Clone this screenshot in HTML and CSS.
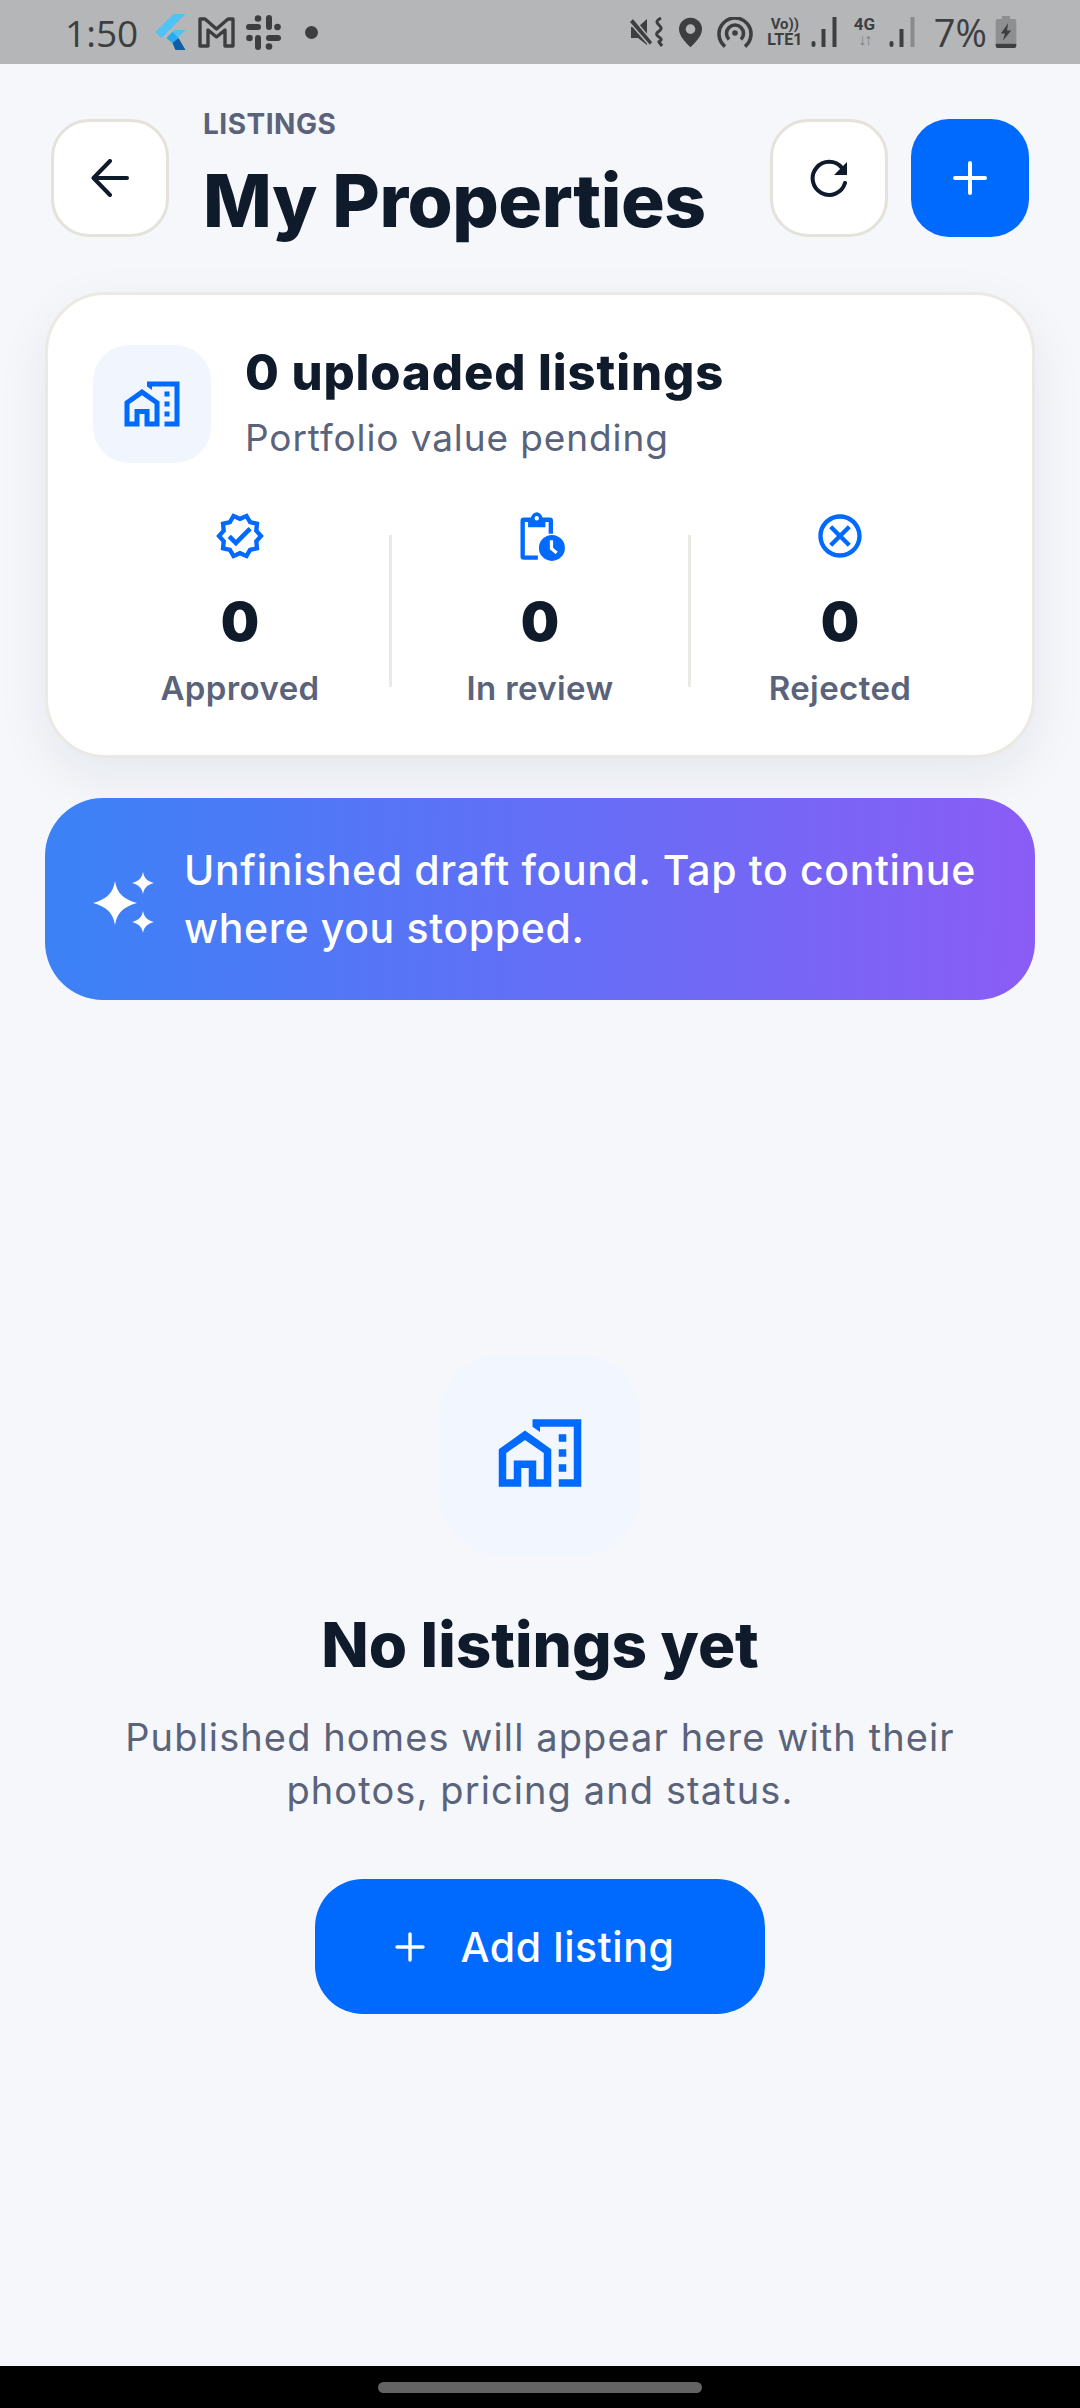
FILE: index.html
```html
<!DOCTYPE html>
<html lang="en">
<head>
<meta charset="utf-8">
<title>My Properties</title>
<link rel="stylesheet" href="styles.css">
</head>
<body>
<div class="phone">
  <div class="status">
    <div class="status-left">
      <span class="time">1:50</span>
      <svg class="si flutter" viewBox="0 0 30 36"><path fill="#4fc3f7" d="M0 18 18 0h12L6 24z"/><path fill="#4fc3f7" d="M11 24 19 16h11L17 29z"/><path fill="#29a9f0" d="m11 24 6-6 6 6-6 5z"/><path fill="#0d5ea8" d="m17 29 6-5 7 12H20z"/></svg>
      <svg class="si gmail" viewBox="0 0 37 32"><path fill="none" stroke="#3d3e40" stroke-width="3.400" stroke-linejoin="round" d="M2 3h5l11.500 10L30 3h5v27h-8V14l-8.500 7L10 14v16H2z"/></svg>
      <svg class="si slack" viewBox="0 0 35 35" fill="#3d3e40"><rect x="0" y="9" width="15" height="6" rx="3"/><circle cx="12" cy="3.500" r="3.300"/><rect x="20" y="0" width="6" height="15" rx="3"/><circle cx="31.500" cy="12" r="3.300"/><rect x="20" y="20" width="15" height="6" rx="3"/><circle cx="23" cy="31.500" r="3.300"/><rect x="9" y="20" width="6" height="15" rx="3"/><circle cx="3.500" cy="23" r="3.300"/></svg>
      <span class="dot"></span>
    </div>
    <div class="status-right">
      <svg class="si mute" viewBox="0 0 34 32"><path fill="#3d3e40" d="M1 11h7l9-8v26l-9-7H1z"/><path fill="#3d3e40" stroke="#b5b6b8" stroke-width="1.500" d="M3 2 23 26l-3 4L-1 6z"/><path fill="none" stroke="#3d3e40" stroke-width="3" d="M31 2c-5 3-5 4-2 7s3 4-1 7 2 5 3 7-3 2-2 3l3 4"/></svg>
      <svg class="si pin" viewBox="0 0 24 31"><path fill="#3d3e40" fill-rule="evenodd" d="M12 0a12 12 0 0 1 12 12c0 7-7 14-12 19C7 26 0 19 0 12A12 12 0 0 1 12 0zm0 7a5 5 0 1 0 0 10 5 5 0 0 0 0-10z"/></svg>
      <svg class="si hotspot" viewBox="0 0 36 31" fill="none" stroke="#3d3e40" stroke-width="3.600"><path d="M8 29.500a16 16 0 1 1 20 0"/><path d="M12 22.500a8.500 8.500 0 1 1 12 0"/><circle cx="18" cy="16" r="2.800" fill="#3d3e40" stroke="none"/></svg>
      <span class="net"><span class="net-top">Vo))</span><span>LTE1</span></span>
      <svg class="si bars" viewBox="0 0 26 30" fill="#3d3e40"><rect x="0" y="24" width="4" height="6" rx="2"/><rect x="10" y="12" width="4" height="18"/><rect x="21" y="0" width="4" height="30"/></svg>
      <span class="net net-4g"><span>4G</span><span class="arrows">↓↑</span></span>
      <svg class="si bars bars-weak" viewBox="0 0 26 30"><rect x="0" y="24" width="4" height="6" rx="2" fill="#3d3e40"/><rect x="10" y="12" width="4" height="18" fill="#3d3e40"/><rect x="21" y="0" width="4" height="30" fill="#8a8b8d"/></svg>
      <span class="pct">7%</span>
      <svg class="si batt" viewBox="0 0 20 31"><path fill="#8e8f91" d="M6 0h8v3h4a2 2 0 0 1 2 2v22H0V5a2 2 0 0 1 2-2h4z"/><path fill="#3d3e40" d="M0 27h20v2a2 2 0 0 1-2 2H2a2 2 0 0 1-2-2z"/><path fill="#3d3e40" d="M12 7 5 17h4l-2 7 8-10h-4z"/></svg>
    </div>
  </div>

  <main class="main">
    <header class="head">
      <button class="btn btn-light">
        <svg class="ico-arrow" viewBox="0 0 38 38" fill="none" stroke="#0f1a2b" stroke-width="4" stroke-linecap="round" stroke-linejoin="round"><path d="M36 19H3M19 2 2.500 19 19 36"/></svg>
      </button>
      <div class="titles">
        <div class="eyebrow">LISTINGS</div>
        <h1 class="title">My Properties</h1>
      </div>
      <div class="actions">
        <button class="btn btn-light">
          <svg class="ico-refresh" viewBox="0 0 38 38" fill="none"><path stroke="#0f1a2b" stroke-width="4" stroke-linecap="round" d="M32 9A16.500 16.500 0 1 0 35 24"/><path fill="#0f1a2b" d="M37 3v13H24z"/></svg>
        </button>
        <button class="btn btn-blue">
          <svg class="ico-plus" viewBox="0 0 34 34" fill="none" stroke="#fff" stroke-width="4" stroke-linecap="round"><path d="M17 2v30M2 17h30"/></svg>
        </button>
      </div>
    </header>

    <section class="card">
      <div class="card-top">
        <div class="tile">
          <svg class="ico-60" viewBox="0 0 24 24"><use href="#homework"/></svg>
        </div>
        <div>
          <div class="card-title">0 uploaded listings</div>
          <div class="card-sub">Portfolio value pending</div>
        </div>
      </div>
      <div class="stats">
        <div class="stat">
          <svg class="ico-52" viewBox="0 0 24 24"><path fill="#0069fe" fill-rule="evenodd" d="M23 11.990l-2.440-2.790.340-3.690-3.610-.820L15.400 1.500 12 2.960 8.600 1.500 6.710 4.690 3.100 5.500l.340 3.700L1 11.990l2.440 2.790-.340 3.700 3.610.820 1.890 3.200L12 21.040l3.400 1.470 1.890-3.190 3.610-.820-.340-3.690L23 11.990zm-3.950 1.480-.560.650.080.850.180 1.950-1.900.430-.840.190-.440.740-.990 1.680-1.780-.770-.800-.340-.790.340-1.780.770-.990-1.670-.440-.740-.840-.190-1.900-.430.180-1.960.080-.850-.560-.650L3.670 12l1.290-1.480.560-.650-.090-.860-.180-1.940 1.900-.430.840-.190.440-.740.990-1.680 1.780.770.800.340.790-.340 1.780-.770.990 1.680.440.740.840.190 1.900.430-.180 1.950-.080.850.560.650 1.290 1.470-1.280 1.470z"/><path fill="#0069fe" d="m10.090 13.750-2.320-2.330-1.480 1.490 3.800 3.810 7.340-7.360-1.480-1.490z"/></svg>
          <div class="stat-num">0</div>
          <div class="stat-label">Approved</div>
        </div>
        <div class="stat stat-mid">
          <svg class="ico-52" viewBox="0 0 24 24"><path fill="#0069fe" fill-rule="evenodd" d="M4.500 3.500h3.300C8.200 2 9.300 1 10.500 1s2.300 1 2.700 2.500h3.300A1.500 1.500 0 0 1 18 5v6h-2V5.500h-1.500V8h-8V5.500H5v15.500h6v2H4.500A1.500 1.500 0 0 1 3 21.500V5a1.500 1.500 0 0 1 1.500-1.500zm6-.7a1 1 0 1 0 0 2 1 1 0 0 0 0-2z"/><circle cx="17.500" cy="17.500" r="6" fill="#0069fe"/><path fill="none" stroke="#fff" stroke-width="1.500" d="M17.300 14v3.800l2.400 2"/></svg>
          <div class="stat-num">0</div>
          <div class="stat-label">In review</div>
        </div>
        <div class="stat">
          <svg class="ico-52" viewBox="0 0 24 24"><path fill="#0069fe" d="M12 2C6.470 2 2 6.470 2 12s4.470 10 10 10 10-4.470 10-10S17.530 2 12 2zm0 18c-4.410 0-8-3.590-8-8s3.590-8 8-8 8 3.590 8 8-3.590 8-8 8zm3.590-13L12 10.590 8.410 7 7 8.410 10.590 12 7 15.590 8.410 17 12 13.410 15.590 17 17 15.590 13.410 12 17 8.410z"/></svg>
          <div class="stat-num">0</div>
          <div class="stat-label">Rejected</div>
        </div>
      </div>
    </section>

    <section class="banner">
      <svg class="ico-spark" viewBox="0 0 62 62" fill="#fff"><path d="M23 9c2 12 8 18 22 22-14 4-20 10-22 22-2-12-8-18-22-22 14-4 20-10 22-22z"/><path d="M51 0c1 6 4 9 11 11-7 2-10 5-11 11-1-6-4-9-11-11 7-2 10-5 11-11z"/><path d="M51 39c1 6 4 9 11 11-7 2-10 5-11 11-1-6-4-9-11-11 7-2 10-5 11-11z"/></svg>
      <p class="banner-text">Unfinished draft found. Tap to continue where you stopped.</p>
    </section>

    <section class="empty">
      <div class="tile tile-big">
        <svg class="ico-90" viewBox="0 0 24 24"><use href="#homework"/></svg>
      </div>
      <h2 class="empty-title">No listings yet</h2>
      <p class="empty-text">Published homes will appear here with their photos, pricing and status.</p>
      <button class="add">
        <svg class="ico-add" viewBox="0 0 30 30" fill="none" stroke="#fff" stroke-width="3.400" stroke-linecap="round"><path d="M15 2v26M2 15h26"/></svg>
        <span>Add listing</span>
      </button>
    </section>
  </main>

  <div class="navbar"><span class="pill"></span></div>
</div>
<svg class="defs" width="0" height="0"><defs><symbol id="homework" viewBox="0 0 24 24"><path fill="#0069fe" fill-rule="evenodd" d="M1 11v10h6v-5h2v5h6V11L8 6l-7 5zm12 8h-2v-5H5v5H3v-7l5-3.500 5 3.500v7z"/><path fill="#0069fe" d="M10 3v1.970l2 1.430V5h9v14h-4v2h6V3H10zM17 7h2v2h-2zM17 11h2v2h-2zM17 15h2v2h-2z"/></symbol></defs></svg>
</body>
</html>
```

FILE: styles.css
```css
* { box-sizing: border-box; }
html, body { margin: 0; padding: 0; }
body { background: #f5f7fb; font-family: "Inter", "Liberation Sans", sans-serif; color: #0f1a2b; }
p, h1, h2 { margin: 0; }
button { font: inherit; padding: 0; cursor: pointer; }

.phone { width: 1080px; height: 2408px; display: flex; flex-direction: column; overflow: hidden; }

/* status bar */
.status { height: 64px; flex: none; background: #b5b6b8; display: flex; justify-content: space-between; align-items: center; padding: 0 63px 0 65px; color: #3d3e40; }
.status-left, .status-right { display: flex; align-items: center; }
.time { font: 400 37px/1 "Open Sans", sans-serif; margin-right: 17px; }
.si { display: block; flex: none; }
.flutter { width: 31px; height: 36px; margin-right: 12px; }
.gmail { width: 37px; height: 32px; margin-right: 11px; }
.slack { width: 35px; height: 35px; }
.dot { width: 13px; height: 13px; border-radius: 50%; background: #3d3e40; margin-left: 24px; }
.mute { width: 34px; height: 32px; margin-right: 15px; }
.pin { width: 23px; height: 31px; margin-right: 15px; }
.hotspot { width: 36px; height: 31px; margin-right: 12px; }
.net { width: 40px; display: flex; flex-direction: column; align-items: center; font: 700 16px/15px "Roboto", sans-serif; color: #3d3e40; margin-right: 5px; }
.net-top { font-size: 15px; }
.bars { width: 29px; height: 30px; margin-right: 13px; }
.net-4g { width: 25px; font-size: 17px; line-height: 16px; margin-right: 11px; }
.arrows { color: #808183; font-size: 16px; letter-spacing: -2px; }
.bars-weak { margin-right: 17px; }
.pct { font: 400 38px/1 "Open Sans", sans-serif; margin-right: 8px; }
.batt { width: 22px; height: 32px; }

/* main */
.main { flex: 1; display: flex; flex-direction: column; padding: 55px 45px 0; }
.head { height: 118px; display: flex; align-items: flex-start; padding: 0 6px; }
.btn { width: 118px; height: 118px; border-radius: 38px; display: flex; align-items: center; justify-content: center; flex: none; }
.btn-light { background: #fff; border: 3px solid #e4e2da; }
.btn-blue { background: #0069fe; border: 0; }
.ico-arrow { width: 38px; height: 38px; }
.ico-refresh { width: 38px; height: 38px; }
.ico-plus { width: 34px; height: 34px; }
.titles { flex: 1; margin: -12px 0 0 34px; }
.eyebrow { font-weight: 700; font-size: 28px; line-height: 34px; color: #5a637a; letter-spacing: .5px; }
.title { font-weight: 800; font-size: 73px; line-height: 84px; letter-spacing: -.5px; color: #0f1a2b; white-space: nowrap; margin-top: 18px; }
.actions { display: flex; gap: 23px; }

.card { margin: 55px 0 0; height: 466px; background: #fff; border: 3px solid #ebe9e3; border-radius: 60px; box-shadow: 0 18px 54px rgba(15, 26, 43, .07); padding: 49px 45px 0; }
.card-top { display: flex; align-items: center; gap: 34px; }
.tile { width: 118px; height: 118px; border-radius: 36px; background: #f1f6fe; display: flex; align-items: center; justify-content: center; flex: none; }
.ico-60 { width: 60px; height: 60px; }
.card-title { font-weight: 800; font-size: 49px; line-height: 58px; letter-spacing: .9px; color: #0f1a2b; white-space: nowrap; }
.card-sub { font-weight: 400; font-size: 37px; line-height: 50px; letter-spacing: .9px; color: #5a637a; margin-top: 11px; }

.stats { display: flex; margin: 47px -3px 0; }
.stat { flex: 1; display: flex; flex-direction: column; align-items: center; }
.stat-mid { position: relative; }
.stat-mid::before, .stat-mid::after { content: ""; position: absolute; top: 25px; height: 152px; width: 3px; background: #ebe9e3; }
.stat-mid::before { left: -1px; }
.stat-mid::after { right: -1px; }
.ico-52 { width: 52px; height: 52px; display: block; }
.stat-num { font-weight: 900; font-size: 54px; line-height: 62px; margin-top: 29px; color: #0f1a2b; }
.stat-label { font-weight: 600; font-size: 33px; line-height: 42px; letter-spacing: .4px; color: #5a637a; margin-top: 14px; }

.banner { margin-top: 40px; height: 202px; border-radius: 58px; background: linear-gradient(91deg, #3b82f6, #8b5cf6); display: flex; align-items: center; padding: 0 50px 0 47px; gap: 30px; }
.ico-spark { width: 62px; height: 62px; flex: none; margin-top: 8px; }
.banner-text { font-weight: 500; font-size: 41px; line-height: 58px; letter-spacing: .65px; color: #fff; }

.empty { display: flex; flex-direction: column; align-items: center; margin-top: 355px; }
.tile-big { width: 200px; height: 200px; border-radius: 60px; background: #f2f6fe; }
.ico-90 { width: 90px; height: 90px; margin-bottom: 4px; }
.empty-title { font-weight: 800; font-size: 62px; line-height: 72px; margin-top: 54px; color: #0f1a2b; }
.empty-text { width: 880px; text-align: center; font-weight: 400; font-size: 38px; line-height: 53px; letter-spacing: 1.1px; color: #5a637a; margin-top: 30px; }
.add { margin-top: 62px; width: 450px; height: 135px; border: 0; border-radius: 48px; background: #0069fe; color: #fff; display: flex; align-items: center; justify-content: center; gap: 35px; padding-right: 10px; font-weight: 500; font-size: 41px; letter-spacing: .6px; }
.ico-add { width: 30px; height: 30px; }

.navbar { height: 42px; flex: none; background: #000; display: flex; justify-content: center; padding-top: 16px; }
.pill { width: 324px; height: 11px; border-radius: 6px; background: #636363; }
.defs { position: absolute; }
```
